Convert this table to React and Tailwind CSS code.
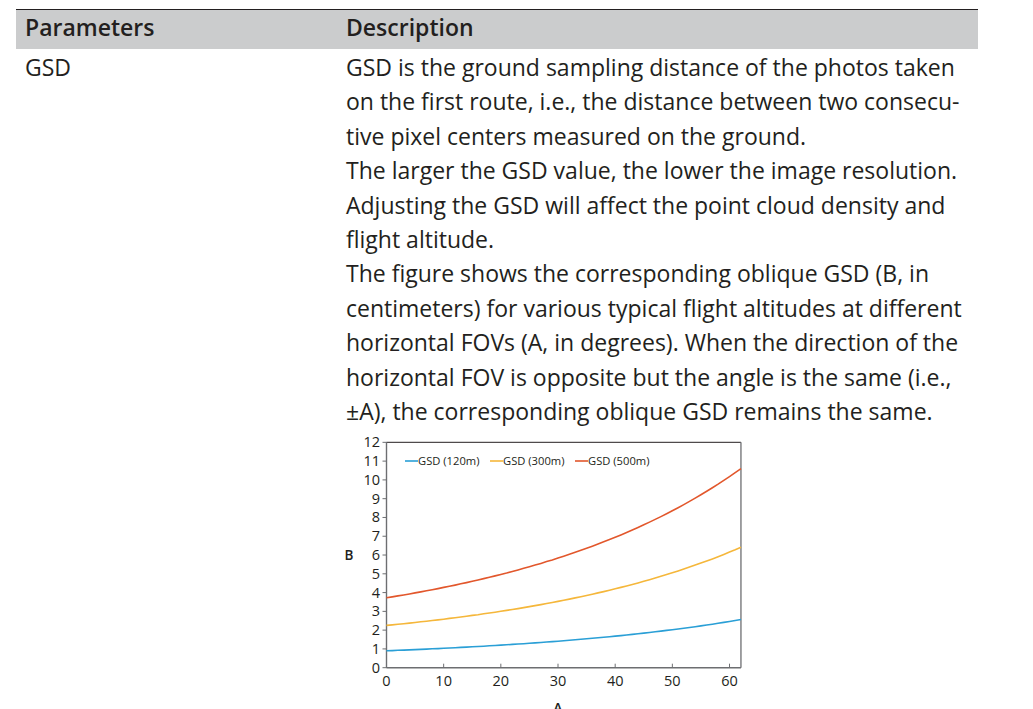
import React from 'react'

const lines = [
  'GSD is the ground sampling distance of the photos taken',
  'on the first route, i.e., the distance between two consecu-',
  'tive pixel centers measured on the ground.',
  'The larger the GSD value, the lower the image resolution.',
  'Adjusting the GSD will affect the point cloud density and',
  'flight altitude.',
  'The figure shows the corresponding oblique GSD (B, in',
  'centimeters) for various typical flight altitudes at different',
  'horizontal FOVs (A, in degrees). When the direction of the',
  'horizontal FOV is opposite but the angle is the same (i.e.,',
  '±A), the corresponding oblique GSD remains the same.',
]

// plot frame, in svg coordinates
const X0 = 49.5
const XU = 5.717
const Y0 = 237.7
const YU = 18.78

const sx = (a) => X0 + a * XU
const sy = (v) => Y0 - v * YU

function curve(base) {
  const pts = []
  for (let a = 0; a <= 62; a += 1) {
    const v = base * Math.exp(0.01329 * a + 0.000058 * a * a)
    pts.push(`${sx(a).toFixed(1)},${sy(v).toFixed(1)}`)
  }
  return pts.join(' ')
}

function Chart() {
  const ys = Array.from({ length: 13 }, (_, i) => i)
  const xs = [0, 10, 20, 30, 40, 50, 60]
  const series = [
    { label: 'GSD (120m)', color: '#2a9fd6', base: 0.9, lx: 68 },
    { label: 'GSD (300m)', color: '#f5b73b', base: 2.25, lx: 153 },
    { label: 'GSD (500m)', color: '#e2572c', base: 3.72, lx: 238 },
  ]
  return (
    <svg width="420" height="279" className="block" style={{ fontFamily: '"Open Sans", sans-serif' }}>
      {/* frame */}
      <line x1={X0} y1={12.3} x2={sx(62)} y2={12.3} stroke="#231f20" strokeWidth="1" />
      <line x1={sx(62)} y1={12.3} x2={sx(62)} y2={Y0} stroke="#6d6e71" strokeWidth="1.3" />
      <line x1={X0} y1={12} x2={X0} y2={Y0} stroke="#6d6e71" strokeWidth="1.4" />
      <line x1={X0} y1={Y0} x2={sx(62)} y2={Y0} stroke="#6d6e71" strokeWidth="1.4" />

      {ys.map((v) => (
        <g key={v}>
          <line x1={X0 - 4} y1={sy(v)} x2={X0} y2={sy(v)} stroke="#6d6e71" strokeWidth="1" />
          <text x={43} y={sy(v) + 5} textAnchor="end" fontSize="14.5" fill="#231f20">
            {v}
          </text>
        </g>
      ))}
      {xs.map((a) => (
        <g key={a}>
          <line x1={sx(a)} y1={Y0 - 4} x2={sx(a)} y2={Y0} stroke="#6d6e71" strokeWidth="1" />
          <text x={sx(a)} y={256} textAnchor="middle" fontSize="14.5" fill="#231f20">
            {a}
          </text>
        </g>
      ))}

      <text x={12} y={130} textAnchor="middle" fontSize="13.5" fontWeight="600" fill="#231f20">
        B
      </text>
      <text x={221} y={283} textAnchor="middle" fontSize="14" fontWeight="600" fill="#231f20">
        A
      </text>

      {series.map((s) => (
        <g key={s.label}>
          <polyline points={curve(s.base)} fill="none" stroke={s.color} strokeWidth="1.6" />
          <line x1={s.lx} y1={31} x2={s.lx + 13} y2={31} stroke={s.color} strokeWidth="1.6" />
          <text x={s.lx + 13} y={35} fontSize="11.2" fill="#231f20">
            {s.label}
          </text>
        </g>
      ))}
    </svg>
  )
}

export default function App() {
  return (
    <div className="min-h-[709px] bg-white pt-[9px] text-[#231f20]" style={{ fontFamily: '"Open Sans", sans-serif' }}>
      <div className="ml-[16px] w-[962px] border-t border-[#231f20]">
        <div className="grid h-[39px] grid-cols-[321px_1fr] items-center bg-[#cbcccd] pb-[5px] text-[23px] font-semibold">
          <div className="pl-[9px]">Parameters</div>
          <div className="pl-[9px]">Description</div>
        </div>
        <div className="grid grid-cols-[321px_1fr] pt-[1px] text-[23px] leading-[34.4px]">
          <div className="pl-[9px]">GSD</div>
          <div>
            <div className="pl-[9px]">
              {lines.map((l) => (
                <div key={l} className="whitespace-nowrap">
                  {l}
                </div>
              ))}
            </div>
            <div className="mt-[2px]">
              <Chart />
            </div>
          </div>
        </div>
      </div>
    </div>
  )
}
